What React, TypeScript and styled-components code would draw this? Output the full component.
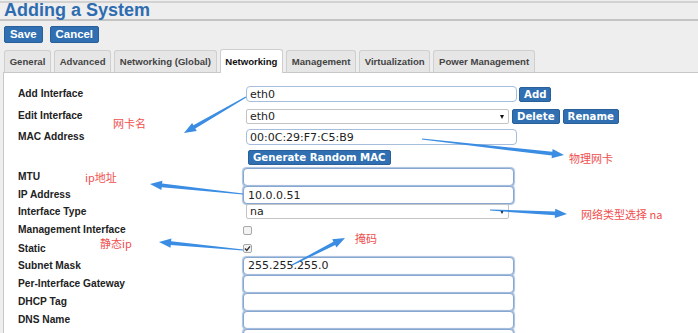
import React from 'react'
import styled, { createGlobalStyle } from 'styled-components'

const GlobalStyle = createGlobalStyle`
  html, body {
    margin: 0;
    padding: 0;
    background: #eeeeee;
  }
  body {
    font-family: 'Liberation Sans', Arial, sans-serif;
  }
`

const Page = styled.div`
  position: relative;
  width: 698px;
  height: 333px;
  overflow: hidden;
  background: #eeeeee;
`

const Header = styled.div`
  margin-top: 1px;
  height: 16px;
  border-top: 2px solid #d2d2d2;
  border-bottom: 2px solid #c4c4c4;
`

const Title = styled.h1`
  margin: -3px 0 0 4px;
  font: bold 18px/20px 'Liberation Sans', Arial, sans-serif;
  color: #2d6cb0;
`

const Toolbar = styled.div`
  display: flex;
  gap: 7px;
  margin-top: 5px;
  padding-left: 4px;
`

const MainButton = styled.button`
  box-sizing: border-box;
  height: 17px;
  margin: 0;
  padding: 0 5px;
  border: 1px solid #2a609a;
  border-radius: 2px;
  background: #306fb1;
  color: #fff;
  font: bold 11.4px/15px 'Liberation Sans', Arial, sans-serif;
`

const TabBar = styled.div`
  display: flex;
  align-items: flex-end;
  gap: 3px;
  height: 23px;
  margin-top: 6px;
  padding-left: 4px;
`

const Tab = styled.div<{ $active?: boolean }>`
  position: relative;
  z-index: 1;
  box-sizing: border-box;
  height: ${(p) => (p.$active ? 24 : 22)}px;
  margin-bottom: ${(p) => (p.$active ? -1 : 0)}px;
  padding: 0 4.65px;
  display: flex;
  align-items: center;
  border: 1px solid #cfcfcf;
  border-bottom: none;
  border-radius: 3px 3px 0 0;
  background: ${(p) => (p.$active ? '#ffffff' : '#e6e6e6')};
  color: ${(p) => (p.$active ? '#111' : '#444')};
  font: bold 9.6px/12px 'Liberation Sans', Arial, sans-serif;
  white-space: nowrap;
`

const Panel = styled.div`
  margin-left: 3px;
  height: 270px;
  padding: 10px 0 0 14px;
  border-top: 1px solid #c8c8c8;
  border-left: 1px solid #c8c8c8;
  background: #ffffff;
`

const Row = styled.div<{ $h: number }>`
  display: grid;
  grid-template-columns: 228px auto;
  align-items: center;
  height: ${(p) => p.$h}px;
`

const Label = styled.div`
  font: bold 10.2px/12px 'Liberation Sans', Arial, sans-serif;
  color: #222;
  white-space: nowrap;
`

const Field = styled.div`
  display: flex;
  align-items: center;
  gap: 3px;
`

const TextInput = styled.input<{ $low?: boolean }>`
  box-sizing: border-box;
  width: 271px;
  height: ${(p) => (p.$low ? 18 : 16)}px;
  margin: 0 0 0 ${(p) => (p.$low ? -3 : 0)}px;
  padding: 0 ${(p) => (p.$low ? 4 : 3)}px;
  border: 1px solid ${(p) => (p.$low ? '#87a7d1' : '#a6bddb')};
  border-radius: 4px;
  box-shadow: ${(p) => (p.$low ? '0 0 1px 0.5px #a9c0de' : 'none')};
  background: #fff;
  color: #222;
  font: 11px 'DejaVu Sans', Verdana, sans-serif;
  outline: none;
`

const SelectBox = styled.div`
  box-sizing: border-box;
  position: relative;
  width: 263px;
  height: 15px;
  padding: 0 3px;
  border: 1px solid #c4c4c4;
  border-radius: 2px;
  background: #fff;
  color: #222;
  font: 11px/13px 'DejaVu Sans', Verdana, sans-serif;
`

const Caret = styled.span`
  position: absolute;
  right: 4px;
  top: 5px;
  width: 0;
  height: 0;
  border-left: 2.5px solid transparent;
  border-right: 2.5px solid transparent;
  border-top: 4px solid #111;
`

const ActionButton = styled.button<{ $h?: number; $ml?: number }>`
  box-sizing: border-box;
  height: ${(p) => p.$h ?? 15}px;
  margin: 0 0 0 ${(p) => p.$ml ?? 0}px;
  padding: 0 4px;
  border: 1px solid #2a609a;
  border-radius: 2px;
  background: #306fb1;
  color: #fff;
  font: bold 10.2px/13px 'DejaVu Sans', Verdana, sans-serif;
  white-space: nowrap;
`

const Check = styled.span`
  box-sizing: border-box;
  display: flex;
  align-items: center;
  justify-content: center;
  width: 9px;
  height: 9px;
  margin-left: -3px;
  border: 1px solid #a8a8a8;
  border-radius: 2px;
  background: #f3f3f3;
`

const Overlay = styled.svg`
  position: absolute;
  left: 0;
  top: 0;
  pointer-events: none;
`

const Note = styled.span<{ $x: number; $y: number }>`
  position: absolute;
  left: ${(p) => p.$x}px;
  top: ${(p) => p.$y}px;
  color: #ef4f4f;
  font: 11px/12px 'Noto Sans CJK SC', 'Liberation Sans', sans-serif;
  white-space: pre;
`

type Pt = [number, number]

// tapered arrow, thin at the tail and wide at the head
function arrowPoints(tail: Pt, tip: Pt): string {
  const dx = tip[0] - tail[0]
  const dy = tip[1] - tail[1]
  const len = Math.hypot(dx, dy)
  const ux = dx / len
  const uy = dy / len
  const nx = -uy
  const ny = ux
  const head = 12
  const bx = tip[0] - ux * head
  const by = tip[1] - uy * head
  const pts: Pt[] = [
    [tail[0] + nx * 0.6, tail[1] + ny * 0.6],
    [bx + nx * 1.9, by + ny * 1.9],
    [bx + nx * 4.6, by + ny * 4.6],
    tip,
    [bx - nx * 4.6, by - ny * 4.6],
    [bx - nx * 1.9, by - ny * 1.9],
    [tail[0] - nx * 0.6, tail[1] - ny * 0.6],
  ]
  return pts.map((p) => p.map((v) => v.toFixed(1)).join(',')).join(' ')
}

const arrows: [Pt, Pt][] = [
  [[246, 97], [184, 133]],
  [[422, 139], [564, 155]],
  [[243, 194], [150, 184]],
  [[243, 250], [159, 242]],
  [[292, 265], [345, 238]],
  [[490, 210], [567, 214]],
]

const notes = [
  { x: 113, y: 117, text: '网卡名' },
  { x: 85, y: 171, text: 'ip地址' },
  { x: 100, y: 237, text: '静态ip' },
  { x: 355, y: 232, text: '掩码' },
  { x: 569, y: 152, text: '物理网卡' },
  { x: 581, y: 208, text: '网络类型选择 na' },
]

const tabs = [
  'General',
  'Advanced',
  'Networking (Global)',
  'Networking',
  'Management',
  'Virtualization',
  'Power Management',
]

const CheckMark = () => (
  <svg width="7" height="7" viewBox="0 0 7 7">
    <path d="M1 3.6 L2.8 5.4 L6 1.4" fill="none" stroke="#333" strokeWidth="1.4" />
  </svg>
)

export default function App() {
  return (
    <Page>
      <GlobalStyle />
      <Header>
        <Title>Adding a System</Title>
      </Header>
      <Toolbar>
        <MainButton>Save</MainButton>
        <MainButton>Cancel</MainButton>
      </Toolbar>
      <TabBar>
        {tabs.map((t) => (
          <Tab key={t} $active={t === 'Networking'}>
            {t}
          </Tab>
        ))}
      </TabBar>
      <Panel>
        <Row $h={22}>
          <Label>Add Interface</Label>
          <Field>
            <TextInput defaultValue="eth0" />
            <ActionButton $ml={-1}>Add</ActionButton>
          </Field>
        </Row>
        <Row $h={22}>
          <Label>Edit Interface</Label>
          <Field>
            <SelectBox>
              eth0
              <Caret />
            </SelectBox>
            <ActionButton>Delete</ActionButton>
            <ActionButton>Rename</ActionButton>
          </Field>
        </Row>
        <Row $h={20}>
          <Label>MAC Address</Label>
          <Field>
            <TextInput defaultValue="00:0C:29:F7:C5:B9" />
          </Field>
        </Row>
        <Row $h={20}>
          <Label />
          <Field>
            <ActionButton $ml={2}>Generate Random MAC</ActionButton>
          </Field>
        </Row>
        <Row $h={19}>
          <Label>MTU</Label>
          <Field>
            <TextInput $low defaultValue="" />
          </Field>
        </Row>
        <Row $h={18}>
          <Label>IP Address</Label>
          <Field>
            <TextInput $low defaultValue="10.0.0.51" />
          </Field>
        </Row>
        <Row $h={15}>
          <Label>Interface Type</Label>
          <Field>
            <SelectBox>
              na
              <Caret />
            </SelectBox>
          </Field>
        </Row>
        <Row $h={22}>
          <Label>Management Interface</Label>
          <Field>
            <Check />
          </Field>
        </Row>
        <Row $h={15}>
          <Label>Static</Label>
          <Field>
            <Check>
              <CheckMark />
            </Check>
          </Field>
        </Row>
        <Row $h={19}>
          <Label>Subnet Mask</Label>
          <Field>
            <TextInput $low defaultValue="255.255.255.0" />
          </Field>
        </Row>
        <Row $h={18}>
          <Label>Per-Interface Gateway</Label>
          <Field>
            <TextInput $low defaultValue="" />
          </Field>
        </Row>
        <Row $h={18}>
          <Label>DHCP Tag</Label>
          <Field>
            <TextInput $low defaultValue="" />
          </Field>
        </Row>
        <Row $h={18}>
          <Label>DNS Name</Label>
          <Field>
            <TextInput $low defaultValue="" />
          </Field>
        </Row>
        <Row $h={18}>
          <Label />
          <Field>
            <TextInput $low defaultValue="" />
          </Field>
        </Row>
      </Panel>
      <Overlay width="698" height="333">
        {arrows.map(([a, b], i) => (
          <polygon key={i} points={arrowPoints(a, b)} fill="#3a8de3" />
        ))}
      </Overlay>
      {notes.map((n) => (
        <Note key={n.text} $x={n.x} $y={n.y}>
          {n.text}
        </Note>
      ))}
    </Page>
  )
}
